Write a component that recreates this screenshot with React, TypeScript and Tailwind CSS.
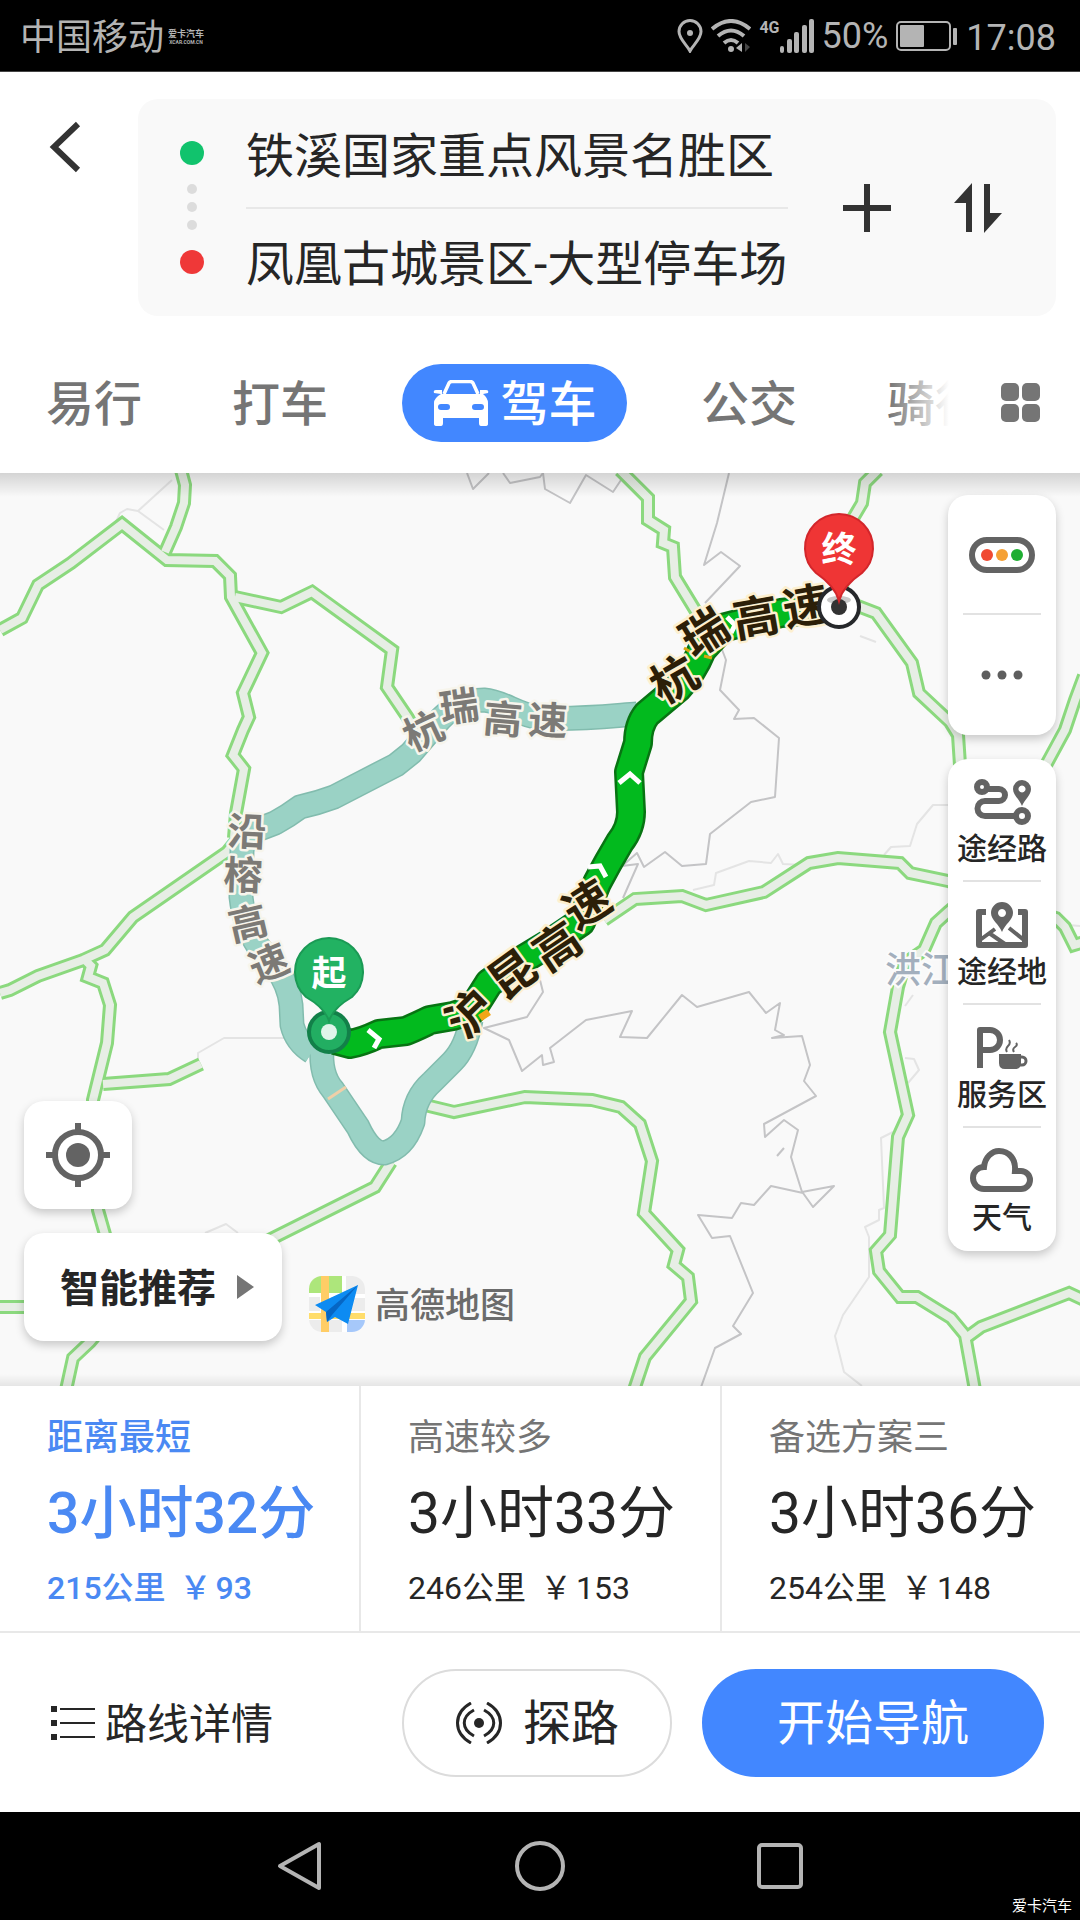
import type { ReactNode } from "react";

const FONT = "font-[Roboto,'Noto_Sans_CJK_SC',sans-serif]";

/* ---------- map data ---------- */

const highways = [
  "0,630 22,618 38,585 71,563 122,524 167,560 215,561 230,576 231,597 262,653 243,693 249,717 243,730 233,755 244,769 236,813 234,838",
  "181,470 185,485 184,503 176,527 165,552",
  "235,597 281,607 312,592 392,650 387,687 408,718 420,740",
  "0,993 10,990 38,976 83,960 105,950 133,917 227,852 240,836",
  "85,960 91,966 88,977 103,983 110,1005 107,1043 93,1100 98,1210 108,1245 100,1330 90,1342 73,1358 66,1390",
  "0,1307 60,1307",
  "103,1084 169,1079 201,1064",
  "391,1162 375,1187 275,1237 230,1260",
  "425,1105 454,1112 525,1097 592,1100 621,1107 640,1124 652,1161 644,1213 678,1250 674,1265 688,1277 691,1301 645,1357 634,1390",
  "604,920 635,899 682,896 706,905 764,892 809,863 838,858 900,863 910,873 948,881 1056,918 1065,927 1074,945 1084,942",
  "960,902 948,912 936,923 924,950 905,963 898,987 890,1032 908,1115 898,1137 890,1235 876,1251 879,1271 900,1297 917,1297 951,1318 965,1335 975,1390",
  "966,1338 981,1327 1069,1293 1084,1300",
  "620,470 648,498 648,520 664,530 663,543 673,547 675,577 700,618",
  "878,470 865,483 862,503 852,520 840,600",
  "850,603 876,613 912,663 919,693 950,722 958,735 960,765",
  "1084,676 1075,700 1065,730 1046,765",
];

const borders = [
  "467,473 473,489 489,473",
  "503,473 510,483 540,477 543,473 545,489 570,503 586,475 613,492 621,480",
  "729,473 717,523 704,565 721,552 740,566 705,603",
  "721,647 726,660 720,690 739,710 734,719 754,718 779,738 775,797 751,802 710,834 706,864 682,866 665,852 644,867 637,853 622,866 638,864 623,898",
  "540,980 543,992 527,1017 484,1028 509,1040 522,1071 542,1055 543,1065 554,1062 550,1048 586,1020 632,1011 620,1037 647,1038 682,995 697,1007 749,992 766,1013 780,1003 775,1030 784,1035 772,1038 802,1036 810,1065 804,1081 816,1096 764,1124 765,1137 784,1120 798,1130 791,1157 802,1192 834,1186 813,1207 803,1193 771,1186 754,1205 741,1203 732,1218 698,1215 712,1238 730,1236 753,1293 733,1326 741,1334 715,1348 700,1390",
  "777,1156 784,1148",
];

const minorLines = [
  "693,890 714,885 716,873 749,861 771,863 778,854 783,864 802,865",
  "884,855 891,847 910,846 917,824 933,805 948,805",
  "893,1132 881,1138 884,1208 879,1210 879,1220 865,1227 869,1237 869,1277 843,1315 835,1336 844,1372 862,1386",
  "905,1058 914,1059 919,1070 908,1083",
  "172,480 138,511 164,530",
  "115,524 120,513 127,509 138,511",
  "198,1060 198,1053 224,1038 285,1038",
  "205,1233 226,1224 238,1233",
  "860,636 876,642",
  "1056,924 1080,926",
  "913,995 905,1006",
];

const alternateRoutes = [
  "M637 714 C610 716 575 720 540 718 C515 714 505 702 484 700 C460 700 446 712 436 724 L411 753 L396 765 L334 797 Q318 803 300 807 Q288 816 275 823 L262 828 Q246 832 242 850 L241 897 Q244 925 258 946 L276 968 Q289 985 291 1005 L292 1025 Q296 1042 312 1052",
  "M322 1048 Q320 1075 333 1090 L358 1127 Q370 1153 384 1153 Q404 1148 413 1122 Q414 1098 432 1082 L452 1062 Q466 1048 471 1020",
];

const mainRoute =
  "M335 1040 L350 1044 Q362 1042 379 1034 L406 1031 Q420 1025 430 1020 L453 1016 L472 1010 L489 983 L517 963 L550 943 L581 922 L597 883 Q608 862 620 842 Q631 828 631 812 L629 772 L638 743 Q638 725 647 714 L678 688 Q693 672 702 650 L722 628 L753 620 L781 613 L839 607";

type Glyph = [string, number, number, number];

const mutedLabels: Glyph[] = [
  ["杭", 423, 731, -25],
  ["瑞", 459, 706, -8],
  ["高", 503, 719, 5],
  ["速", 548, 720, 3],
  ["沿", 247, 831, 3],
  ["榕", 243, 875, 2],
  ["高", 248, 923, -13],
  ["速", 269, 963, -22],
];

const routeLabels: Glyph[] = [
  ["杭", 674, 679, -30],
  ["瑞", 704, 632, -32],
  ["高", 756, 617, -10],
  ["速", 806, 606, -10],
  ["沪", 470, 1013, -45],
  ["昆", 512, 974, -36],
  ["高", 557, 946, -34],
  ["速", 587, 904, -32],
];

function RoadLabel({ glyphs, size, fill, halo }: { glyphs: Glyph[]; size: number; fill: string; halo: string }) {
  return (
    <g
      fontSize={size}
      fill={fill}
      stroke={halo}
      strokeWidth="5"
      strokeLinejoin="round"
      paintOrder="stroke"
      textAnchor="middle"
      className="font-bold"
    >
      {glyphs.map(([char, x, y, angle]) => (
        <text key={`${x}-${y}`} transform={`translate(${x} ${y}) rotate(${angle})`} dy="0.37em">
          {char}
        </text>
      ))}
    </g>
  );
}

function MapCanvas() {
  const line = { fill: "none", strokeLinejoin: "round" as const };
  return (
    <svg
      className="absolute inset-0 h-full w-full"
      viewBox="0 473 1080 913"
      preserveAspectRatio="xMidYMid slice"
      role="img"
      aria-label="路线地图"
    >
      <rect y="473" width="1080" height="913" fill="#f9f9f9" />
      <g {...line} stroke="#e4e4e4" strokeWidth="2">
        {minorLines.map((p) => <polyline key={p} points={p} />)}
      </g>
      <g {...line} stroke="#c4c4c6" strokeWidth="2">
        {borders.map((p) => <polyline key={p} points={p} />)}
      </g>
      <g {...line} stroke="#8bd97e" strokeWidth="14" strokeLinejoin="miter">
        {highways.map((p) => <polyline key={p} points={p} />)}
      </g>
      <g {...line} stroke="#e7eee5" strokeWidth="8" strokeLinejoin="miter">
        {highways.map((p) => <polyline key={p} points={p} />)}
      </g>

      <text x="885" y="983" fontSize="36" fill="#a3afbd" stroke="#fbfbfb" strokeWidth="4" paintOrder="stroke" className="font-medium">
        洪江
      </text>

      <g {...line} stroke="#82bcae" strokeWidth="25">
        {alternateRoutes.map((d) => <path key={d} d={d} />)}
      </g>
      <g {...line} stroke="#9ad2c5" strokeWidth="22">
        {alternateRoutes.map((d) => <path key={d} d={d} />)}
      </g>
      <path d="M328 1099 L346 1087" stroke="#f0cfa8" strokeWidth="3" />

      <path d={mainRoute} {...line} stroke="#087413" strokeWidth="30" />
      <path d={mainRoute} {...line} stroke="#02ba1e" strokeWidth="25" />
      <path d="M480 1018 L489 1012" stroke="#f2a516" strokeWidth="7" />
      <path d="M684 648 L694 654 M704 656 L712 658" stroke="#d8a811" strokeWidth="3" />
      <g {...line} stroke="#fff" strokeWidth="5" strokeLinejoin="miter">
        <path d="M368 1030 L379 1039 L374 1048" />
        <path d="M619 783 L630 774 L640 783" />
        <path d="M588 867 L600 866 L606 877" />
        <path d="M727 617 L735 625 L731 633" />
      </g>

      <RoadLabel glyphs={mutedLabels} size={39} fill="#7c7a76" halo="#f7f5ec" />
      <RoadLabel glyphs={routeLabels} size={46} fill="#2c1f08" halo="#fdf0d0" />

      <circle cx="839" cy="607" r="20" fill="#fff" stroke="#26282b" strokeWidth="4" />
      <ellipse cx="839" cy="600" rx="12" ry="4" fill="#c9c9c9" />
      <circle cx="839" cy="607" r="8" fill="#333" />
      <path d="M839 601 Q835 586 816 573 A34 34 0 1 1 862 573 Q843 586 839 601Z" fill="#ef3535" stroke="#d3262b" strokeWidth="2" />

      <circle cx="329" cy="1032" r="20" fill="#22ae62" stroke="#128049" strokeWidth="4" />
      <circle cx="329" cy="1032" r="8" fill="#e0f5ea" />
      <path d="M329 1021 Q325 1008 306 997 A34 34 0 1 1 352 997 Q333 1008 329 1021Z" fill="#22b262" stroke="#1b9a55" strokeWidth="2" />
      <g fontSize="35" fill="#fff" textAnchor="middle" className="font-bold">
        <text x="839" y="562">终</text>
        <text x="329" y="986">起</text>
      </g>
    </svg>
  );
}

/* ---------- icons ---------- */

function RouteIcon() {
  return (
    <svg viewBox="0 0 58 46" className="h-[46px] w-[58px]" fill="none" stroke="#636363" strokeWidth="6">
      <circle cx="9" cy="8" r="5" strokeWidth="6" />
      <path d="M14 10 H26 a6 6 0 0 1 0 12 H12 a7 7 0 0 0 0 15 H42" />
      <circle cx="49" cy="37" r="6" strokeWidth="6" />
      <path fillRule="evenodd" stroke="none" fill="#636363" d="M49 27 C46 20 40 16 40 10 A9 9 0 0 1 58 10 C58 16 52 20 49 27Z M49 6.500 a3.500 3.500 0 1 0 .01 0Z" />
    </svg>
  );
}

function MapPinIcon() {
  return (
    <svg viewBox="0 0 54 46" className="h-[46px] w-[54px]" fill="none" stroke="#636363" strokeWidth="6">
      <path d="M11 10 H4 V43 H50 V10 H43" strokeLinejoin="round" />
      <path d="M5 38 L20 27 M14 31 L30 42 M34 26 L49 38" strokeWidth="4" />
      <path fillRule="evenodd" stroke="none" fill="#636363" d="M27 30 C24 22 16 18 16 11 A11 11 0 0 1 38 11 C38 18 30 22 27 30Z M27 7 a4 4 0 1 0 .01 0Z" />
    </svg>
  );
}

function ServiceIcon() {
  return (
    <svg viewBox="0 0 52 46" className="h-[46px] w-[52px]" fill="none" stroke="#636363">
      <path d="M4 43 V5 H14 a10 10 0 0 1 0 20 H4" strokeWidth="6" strokeLinejoin="round" />
      <path d="M23 29 H45 V38 q0 6 -6 6 H29 q-6 0 -6 -6Z" fill="#636363" stroke="none" />
      <path d="M44 32 h2 a4 4 0 0 1 0 8 h-3" strokeWidth="3" />
      <path d="M31 27 q-2 -3 1 -6 t1 -6 M38 27 q-2 -3 1 -5 t1 -4" strokeWidth="2" />
    </svg>
  );
}

function WeatherIcon() {
  return (
    <svg viewBox="0 0 64 46" className="h-[46px] w-[64px]" fill="none" stroke="#636363" strokeWidth="6" strokeLinejoin="miter">
      <path d="M14 41 a11 11 0 0 1 0 -22 C15 9 22 3 29 3 C39 3 46 11 45 23 H51 a9 9 0 0 1 0 18Z" />
    </svg>
  );
}

function CarIcon() {
  return (
    <svg viewBox="0 0 56 46" className="h-[46px] w-[56px]" fill="none">
      <path d="M11 14 L16 3 Q17 1.500 19 1.500 H37 Q39 1.500 40 3 L45 14" stroke="#fff" strokeWidth="3.500" />
      <path
        fill="#fff"
        fillRule="evenodd"
        d="M8 14 L1 13 Q0 10 3 10 H9 V14 H47 V10 H53 Q56 10 55 13 L50 14 Q55 18 55 23 V44 Q55 46 52 46 H48 Q46 46 46 43 V38 H10 V43 Q10 46 8 46 H4 Q1 46 1 44 V23 Q1 18 8 14Z M8 24 Q5 24 5 27 Q5 30 8 30 H14 Q17 30 17 27 Q17 24 14 24Z M42 24 Q39 24 39 27 Q39 30 42 30 H48 Q51 30 51 27 Q51 24 48 24Z"
      />
    </svg>
  );
}

function BrandLogo() {
  return (
    <svg viewBox="0 0 56 56" className="h-14 w-14">
      <clipPath id="brand-tile">
        <rect width="56" height="56" rx="13" />
      </clipPath>
      <g clipPath="url(#brand-tile)">
        <rect width="56" height="56" fill="#fff" />
        <rect width="33" height="17" fill="#ade67b" />
        <rect x="37" width="19" height="18" fill="#ececec" />
        <rect y="21" width="11" height="14" fill="#ececec" />
        <rect x="22" y="21" width="11" height="14" fill="#ececec" />
        <rect x="37" y="22" width="19" height="13" fill="#ececec" />
        <rect y="44" width="33" height="12" fill="#ececec" />
        <rect x="38" y="44" width="18" height="12" fill="#a6c8fa" />
        <rect y="37" width="56" height="6" fill="#ffdd6b" />
        <rect x="12" width="8" height="56" fill="#ffcd66" />
        <path d="M6 29 L49 9 L39 48 L26 41 L18 46 L17 36Z" fill="#0d8bf2" />
        <path d="M17 36 L49 9 L23 39 L18 46Z" fill="#0666c4" />
      </g>
    </svg>
  );
}

/* ---------- sections ---------- */

function StatusBar() {
  return (
    <header className="flex h-[72px] items-center justify-between border-b border-[#444] bg-black pl-5 pr-6 text-4xl text-[#b4b4b4]">
      <div className="flex items-center gap-1 pt-1">
        <span>中国移动</span>
        <span className="flex flex-col text-center font-bold">
          <span className="text-[9px] leading-[9px]">爱卡汽车</span>
          <span className="text-[5px] leading-[6px]">XCAR.COM.CN</span>
        </span>
      </div>
      <div className="flex items-center">
        <svg viewBox="0 0 26 34" className="h-[34px] w-[26px]" fill="none" stroke="#b4b4b4" strokeWidth="3">
          <path d="M13 32 C10 26 2 20 2 12.500 A11 11 0 0 1 24 12.500 C24 20 16 26 13 32Z" />
          <circle cx="13" cy="14" r="3" fill="#b4b4b4" stroke="none" />
        </svg>
        <svg viewBox="0 0 40 34" className="ml-2 h-[34px] w-10" fill="none" stroke="#b4b4b4" strokeWidth="4">
          <path d="M1 10 Q20 -6 39 10 M7 17 Q20 6 33 17 M13 24 Q20 18 27 24" />
          <circle cx="20" cy="30" r="3" fill="#b4b4b4" stroke="none" />
          <path d="M31 24 V33 L25 29Z" fill="#b4b4b4" stroke="none" />
          <path d="M34 24 L39 28 L34 33Z" fill="#444" stroke="none" />
        </svg>
        <span className="ml-2 -mt-4 text-base font-bold leading-4">4G</span>
        <svg viewBox="0 0 34 34" className="h-[34px] w-[34px]" fill="#b4b4b4">
          <rect y="27" width="4" height="7" rx="2" />
          <rect x="7" y="20" width="5" height="14" rx="2" />
          <rect x="14" y="13" width="5" height="21" rx="2" />
          <rect x="22" y="6" width="5" height="28" rx="2" />
          <rect x="29" width="5" height="34" rx="2" />
        </svg>
        <span className="ml-2">50%</span>
        <svg viewBox="0 0 62 30" className="ml-2 h-[30px] w-[62px]" fill="none" stroke="#b4b4b4" strokeWidth="2">
          <rect x="1" y="1" width="53" height="28" rx="4" />
          <rect x="4" y="4" width="24" height="22" rx="1" fill="#b4b4b4" stroke="none" />
          <rect x="57" y="7" width="4" height="17" rx="1" fill="#b4b4b4" stroke="none" />
        </svg>
        <span className="ml-2 pt-1">17:08</span>
      </div>
    </header>
  );
}

function TripCard() {
  return (
    <div className="flex pl-10 pr-6 pt-[27px]">
      <button aria-label="返回" className="mt-4 flex h-16 w-[98px] shrink-0 pl-2 pt-1.5">
        <svg viewBox="0 0 34 52" className="h-[52px] w-[34px]" fill="none" stroke="#333" strokeWidth="6">
          <path d="M30 3 L6 26 L30 49" />
        </svg>
      </button>
      <div className="flex min-w-0 flex-1 items-center rounded-[20px] bg-[#f9f9f9] px-[42px]">
        <svg viewBox="0 0 24 134" className="h-[134px] w-6 shrink-0">
          <circle cx="12" cy="12" r="12" fill="#11c36d" />
          <g fill="#dcdcdc">
            <circle cx="12" cy="48" r="5" />
            <circle cx="12" cy="66" r="5" />
            <circle cx="12" cy="84" r="5" />
          </g>
          <circle cx="12" cy="121" r="12" fill="#ef3838" />
        </svg>
        <div className="ml-[42px] min-w-0 flex-1 text-5xl text-[#262626]">
          <button className="block h-[108px] w-full truncate pt-2 text-left leading-[72px]">铁溪国家重点风景名胜区</button>
          <div className="h-0.5 bg-[#e8e8e8]" />
          <button className="block h-[107px] w-full truncate pt-1 text-left leading-[72px]">凤凰古城景区-大型停车场</button>
        </div>
        <button aria-label="添加途经点" className="ml-[55px]">
          <svg viewBox="0 0 48 48" className="h-12 w-12" stroke="#333" strokeWidth="6">
            <path d="M0 24 H48 M24 0 V48" />
          </svg>
        </button>
        <button aria-label="交换起终点" className="ml-[63px] mr-3">
          <svg viewBox="0 0 48 50" className="h-[50px] w-12" fill="#333">
            <path d="M18 0 V49 H12 V20 H0Z" />
            <path d="M30 50 V1 H36 V30 H48Z" />
          </svg>
        </button>
      </div>
    </div>
  );
}

function ModeTabs() {
  const tab = "shrink-0 px-4 pt-1";
  return (
    <div className="flex items-center pt-12 pb-[31px]">
      <nav className="relative flex min-w-0 flex-1 items-center gap-[58px] overflow-hidden pl-[30px] text-5xl font-medium leading-[74px] text-[#757575]">
        <button className={tab}>易行</button>
        <button className={tab}>打车</button>
        <button aria-current="page" className="flex h-[78px] w-[225px] shrink-0 items-center justify-center gap-3 rounded-full bg-[#4287ff] text-white">
          <CarIcon />
          <span className="pt-1">驾车</span>
        </button>
        <button className={tab}>公交</button>
        <button className={tab}>骑行</button>
        <span className="pointer-events-none absolute inset-y-0 right-0 w-[60px] bg-linear-to-r from-white/0 to-white" />
      </nav>
      <button aria-label="全部出行方式" className="flex w-[131px] justify-center pl-3">
        <svg viewBox="0 0 40 40" className="h-10 w-10" fill="#757575">
          <rect width="18" height="18" rx="5" />
          <rect x="21" width="18" height="18" rx="5" />
          <rect y="21" width="18" height="18" rx="5" />
          <rect x="21" y="21" width="18" height="18" rx="5" />
        </svg>
      </button>
    </div>
  );
}

function PanelItem({ icon, label }: { icon: ReactNode; label: string }) {
  return (
    <button className="relative flex h-[123px] flex-col items-center pt-5 text-3xl font-medium leading-[48px] text-[#262626] after:absolute after:inset-x-[15px] after:bottom-0 after:h-0.5 after:bg-[#e2e2e2] last:after:hidden">
      {icon}
      <span className="whitespace-nowrap">{label}</span>
    </button>
  );
}

const panelClass = "flex flex-col rounded-[20px] bg-white shadow-[0_4px_10px_rgba(0,0,0,0.2)]";

function MapSection() {
  return (
    <main className="relative flex min-h-[800px] flex-1 items-end justify-between overflow-hidden bg-[#f9f9f9]">
      <MapCanvas />
      <div className="absolute inset-x-0 top-0 h-6 bg-linear-to-b from-black/15 to-black/0" />
      <div className="absolute inset-x-0 bottom-0 h-3 bg-linear-to-t from-black/8 to-black/0" />

      <div className="relative mb-[45px] ml-6">
        <button aria-label="定位" className={`${panelClass} h-[108px] w-[108px] items-center justify-center`}>
          <svg viewBox="0 0 64 64" className="h-16 w-16" fill="none" stroke="#636363" strokeWidth="6">
            <circle cx="32" cy="32" r="23" />
            <circle cx="32" cy="32" r="12" fill="#636363" stroke="none" />
            <path d="M32 0 V10 M32 54 V64 M0 32 H10 M54 32 H64" />
          </svg>
        </button>
        <div className="mt-6 flex items-end">
          <button className="flex h-[108px] w-[258px] items-center justify-center gap-5 rounded-[20px] bg-white pl-2 text-[39px] font-bold text-[#262626] shadow-[0_4px_10px_rgba(0,0,0,0.2)]">
            <span className="pt-1">智能推荐</span>
            <svg viewBox="0 0 18 24" className="h-6 w-[18px]" fill="#757575">
              <path d="M1 0 L18 12 L1 24Z" />
            </svg>
          </button>
          <div className="mb-2 ml-[27px] flex items-center gap-2.5 text-[35px] font-medium text-[#6b6b6b]">
            <BrandLogo />
            <span className="pt-1.5">高德地图</span>
          </div>
        </div>
      </div>

      <aside className="relative mr-6 flex w-[108px] flex-col gap-6 self-start pt-[22px]">
        <div className={panelClass}>
          <button aria-label="路况" className="relative flex h-[120px] items-center justify-center after:absolute after:inset-x-[15px] after:bottom-0 after:h-0.5 after:bg-[#e2e2e2]">
            <svg viewBox="0 0 66 36" className="h-9 w-[66px]">
              <rect x="3" y="3" width="60" height="30" rx="15" fill="#fff" stroke="#636363" strokeWidth="6" />
              <circle cx="18" cy="18" r="6" fill="#f04a32" />
              <circle cx="33" cy="18" r="6" fill="#f5a034" />
              <circle cx="48" cy="18" r="6" fill="#1fae32" />
            </svg>
          </button>
          <button aria-label="更多" className="flex h-[120px] items-center justify-center">
            <svg viewBox="0 0 42 10" className="h-2.5 w-[42px]" fill="#5e5e5e">
              <circle cx="5" cy="5" r="4.500" />
              <circle cx="21" cy="5" r="4.500" />
              <circle cx="37" cy="5" r="4.500" />
            </svg>
          </button>
        </div>
        <div className={panelClass}>
          <PanelItem icon={<RouteIcon />} label="途经路" />
          <PanelItem icon={<MapPinIcon />} label="途经地" />
          <PanelItem icon={<ServiceIcon />} label="服务区" />
          <PanelItem icon={<WeatherIcon />} label="天气" />
        </div>
      </aside>
    </main>
  );
}

const routes = [
  { name: "距离最短", time: "3小时32分", distance: "215公里", toll: "93", active: true },
  { name: "高速较多", time: "3小时33分", distance: "246公里", toll: "153", active: false },
  { name: "备选方案三", time: "3小时36分", distance: "254公里", toll: "148", active: false },
];

function RouteOptions() {
  return (
    <section className="grid grid-cols-[361fr_361fr_358fr] border-b-2 border-[#e8e8e8] bg-white">
      {routes.map((r) => (
        <button
          key={r.name}
          aria-pressed={r.active}
          className={`flex h-[245px] flex-col whitespace-nowrap border-r-2 border-[#e8e8e8] pl-[47px] pt-[26px] text-left last:border-r-0 ${
            r.active ? "font-medium text-[#4a89f3]" : "text-[#262626]"
          }`}
        >
          <span className={`text-4xl leading-[52px] ${r.active ? "" : "text-[#757575]"}`}>{r.name}</span>
          <span className="mt-2 text-[57px] leading-[84px]">{r.time}</span>
          <span className="mt-2 flex text-[32px] leading-[48px]">
            {r.distance}
            <span className="ml-3.5">￥</span>
            <span className="ml-1">{r.toll}</span>
          </span>
        </button>
      ))}
    </section>
  );
}

function ActionBar() {
  return (
    <section className="flex h-[179px] items-center bg-white pl-[50px] pr-9 text-[#262626]">
      <button className="flex items-center gap-2.5 text-[42px]">
        <svg viewBox="0 0 45 34" className="h-[34px] w-[45px]" fill="#262626">
          <path d="M1 0h6v6h-6z M1 14h6v6h-6z M1 28h6v6h-6z M10 2h35v2h-35z M10 16h35v2h-35z M10 30h35v2h-35z" />
        </svg>
        <span className="pt-1">路线详情</span>
      </button>
      <div className="ml-auto flex gap-[30px] text-5xl">
        <button className="flex h-[108px] w-[270px] items-center justify-center gap-5 rounded-full border-2 border-[#dcdcdc]">
          <svg viewBox="0 0 48 42" className="h-[42px] w-12" fill="none" stroke="#262626" strokeWidth="3">
            <circle cx="24" cy="21" r="5" fill="#262626" stroke="none" />
            <path d="M16 1 C-2 11 -2 31 16 41 M32 1 C50 11 50 31 32 41 M19 8 C6 15 6 27 19 34 M29 8 C42 15 42 27 29 34" />
          </svg>
          <span className="pt-0.5">探路</span>
        </button>
        <button className="h-[108px] w-[342px] rounded-full bg-[#4287ff] pt-0.5 text-white">开始导航</button>
      </div>
    </section>
  );
}

function SystemNav() {
  return (
    <footer className="relative flex h-[108px] items-center justify-center gap-[191px] bg-black">
      <button aria-label="返回键">
        <svg viewBox="0 0 50 50" className="h-[50px] w-[50px]" fill="none" stroke="#b4b4b4" strokeWidth="4" strokeLinejoin="round">
          <path d="M45 3 V47 L6 25Z" />
        </svg>
      </button>
      <button aria-label="主屏幕">
        <svg viewBox="0 0 50 50" className="h-[50px] w-[50px]" fill="none" stroke="#b4b4b4" strokeWidth="4">
          <circle cx="25" cy="25" r="23" />
        </svg>
      </button>
      <button aria-label="最近任务">
        <svg viewBox="0 0 50 50" className="h-[50px] w-[50px]" fill="none" stroke="#b4b4b4" strokeWidth="4">
          <rect x="3" y="4" width="42" height="42" rx="3" />
        </svg>
      </button>
      <span className="absolute bottom-1 right-2 text-[15px] leading-5 text-white">爱卡汽车</span>
    </footer>
  );
}

export default function App() {
  return (
    <div lang="zh-CN" className={`flex min-h-screen flex-col bg-white ${FONT}`}>
      <StatusBar />
      <div className="bg-white">
        <TripCard />
        <ModeTabs />
      </div>
      <MapSection />
      <RouteOptions />
      <ActionBar />
      <SystemNav />
    </div>
  );
}
